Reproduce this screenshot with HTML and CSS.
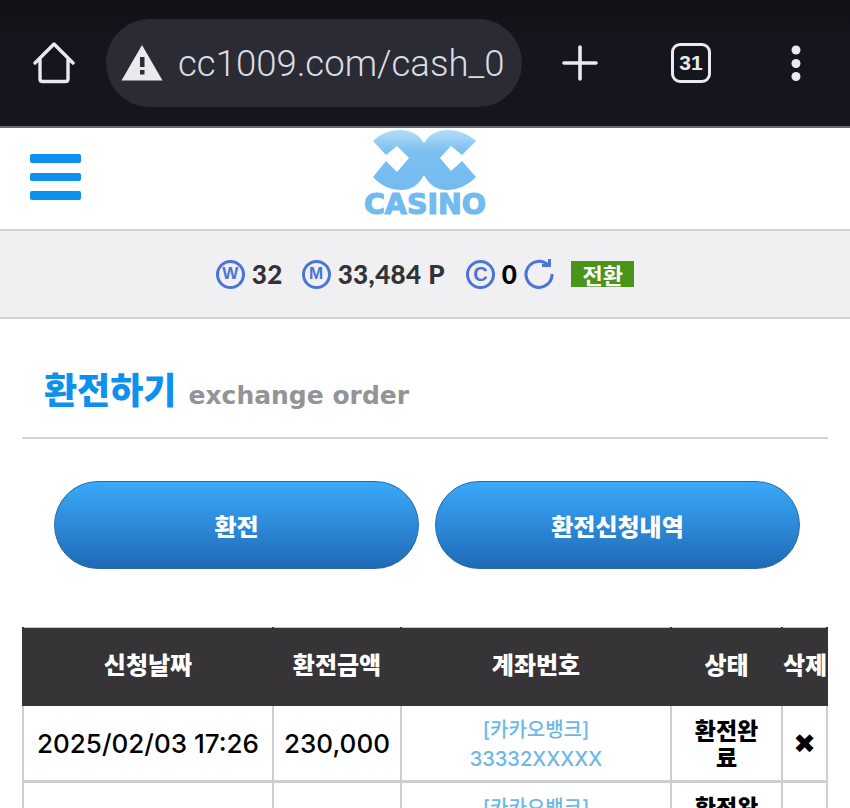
FILE: index.html
```html
<!DOCTYPE html>
<html lang="ko">
<head>
  <meta charset="UTF-8" />
  <title>환전하기</title>
  <link rel="stylesheet" href="styles.css">
</head>
<body>
  <div class="browser-bar">
    <svg class="home-icon" width="42" height="42" viewBox="0 0 42 42" fill="none" stroke="#e9e9ee" stroke-width="3.4" stroke-linejoin="round" stroke-linecap="round">
      <path d="M2 21 L21 2 L40 21 M7 17 V37 Q7 39.5 9.5 39.5 H32.5 Q35 39.5 35 37 V17"/>
    </svg>
    <div class="url-pill">
      <svg width="42" height="36" viewBox="0 0 42 36">
        <path d="M21 0 L41.500 35.500 H0.500 Z" fill="#e9e9ee"/>
        <rect x="19" y="12" width="4.500" height="10" fill="#2a2b34"/>
        <rect x="19" y="25" width="4.500" height="4.500" fill="#2a2b34"/>
      </svg>
      <span class="url-text">cc1009.com/cash_02</span>
    </div>
    <svg class="plus-icon" width="36" height="36" viewBox="0 0 36 36" stroke="#e9e9ee" stroke-width="3.600" stroke-linecap="round">
      <path d="M18 2 V34 M2 18 H34"/>
    </svg>
    <span class="tab-count">31</span>
    <svg class="more-icon" width="10" height="36" viewBox="0 0 10 36" fill="#e9e9ee">
      <circle cx="5" cy="5" r="4.500"/><circle cx="5" cy="18.500" r="4.500"/><circle cx="5" cy="31.500" r="4.500"/>
    </svg>
  </div>

  <header class="site-head">
    <div class="menu-btn"><i></i><i></i><i></i></div>
    <div class="logo">
      <svg width="106" height="62" viewBox="373 129 106 62">
        <defs>
          <linearGradient id="logoFill" x1="0" y1="0" x2="0" y2="1">
            <stop offset="0" stop-color="#b4ddf9"/>
            <stop offset="0.35" stop-color="#7cc0f1"/>
            <stop offset="1" stop-color="#72bbf0"/>
          </linearGradient>
        </defs>
        <path fill="url(#logoFill)" d="M374 141 C382 133 392 130 402 130 C412 130 420 135 425 143 C430 135 438 130 448 130 C458 130 468 133 477 141 L463 155 L452 146 L441 158 L452 171 L463 161 L477 177 C468 186 458 190 448 190 C438 190 430 185 425 175 C420 185 412 190 402 190 C392 190 382 186 374 177 L387 161 L398 172 L410 158 L398 146 L387 155 Z"/>
      </svg>
      <span class="logo-text">CASINO</span>
    </div>
  </header>

  <div class="balance-bar">
    <span class="coin">W</span><b class="amount amount-w">32</b>
    <span class="coin">M</span><b class="amount amount-m">33,484 P</b>
    <span class="coin coin-c">C</span><b class="amount amount-c">0</b>
    <svg class="refresh" width="30" height="30" viewBox="0 0 30 30" fill="none" stroke="#4a74d8" stroke-width="3">
      <path d="M24.500 6.500 A13 13 0 1 0 28 15"/>
      <path d="M18 6.500 H25.500 V0" stroke-width="3"/>
    </svg>
    <span class="convert-btn">전환</span>
  </div>

  <main class="content">
    <div class="page-title">
      <h1>환전하기</h1>
      <span>exchange order</span>
    </div>

    <div class="tab-buttons">
      <a class="pill-btn">환전</a>
      <a class="pill-btn">환전신청내역</a>
    </div>

    <table class="order-table">
      <thead>
        <tr>
          <th class="col-date">신청날짜</th>
          <th class="col-amount">환전금액</th>
          <th class="col-account">계좌번호</th>
          <th class="col-state">상태</th>
          <th class="col-del">삭제</th>
        </tr>
      </thead>
      <tbody>
        <tr>
          <td>2025/02/03 17:26</td>
          <td>230,000</td>
          <td class="account">[카카오뱅크]<br>33332XXXXX</td>
          <td class="state">환전완료</td>
          <td class="del">✖</td>
        </tr>
        <tr>
          <td>2025/02/03 17:26</td>
          <td>230,000</td>
          <td class="account">[카카오뱅크]<br>33332XXXXX</td>
          <td class="state">환전완료</td>
          <td class="del">✖</td>
        </tr>
      </tbody>
    </table>
  </main>
</body>
</html>
```

FILE: styles.css
```css
html, body { margin: 0; height: 808px; overflow: hidden; }
body { font-family: "Noto Sans CJK KR", "Noto Sans", sans-serif; background-color: #fff; color: #000; }

/* browser chrome */
.browser-bar { height: 126px; box-sizing: border-box; background: linear-gradient(#101114, #14151d 30%); display: flex; align-items: center; position: relative; padding-left: 33px; box-shadow: 0 2px 0 #6b6b6e; }
.home-icon { margin-right: 31px; }
.url-pill { width: 416px; height: 88px; border-radius: 44px; background-color: #2a2b34; display: flex; align-items: center; padding-left: 15px; box-sizing: border-box; }
.url-text { width: 327px; margin-left: 15px; overflow: hidden; white-space: nowrap; font-family: Roboto, sans-serif; font-size: 36.500px; font-weight: 300; color: #dcdde1; }
.plus-icon { margin-left: 40px; }
.tab-count { width: 40px; height: 40px; margin-left: 73px; box-sizing: border-box; border: 3.500px solid #e9e9ee; border-radius: 9px; display: flex; align-items: center; justify-content: center; font-family: "Liberation Sans", sans-serif; font-weight: bold; font-size: 21px; color: #e9e9ee; }
.more-icon { margin-left: 80px; }

/* site header */
.site-head { height: 101px; margin-top: 2px; display: flex; align-items: flex-start; position: relative; justify-content: center; border-bottom: 2px solid #d3d3d6; }
.menu-btn { position: absolute; left: 30px; top: 26px; width: 51px; display: flex; flex-direction: column; gap: 10px; }
.menu-btn i { display: block; height: 8.500px; border-radius: 2px; background-color: #0e90ee; }
.logo { display: flex; flex-direction: column; align-items: center; margin-top: 1px; }
.logo-text { font-family: "DejaVu Sans", sans-serif; font-weight: bold; font-size: 28.500px; line-height: 27px; color: #72bbf0; -webkit-text-stroke: 1.2px #72bbf0; }

/* balance */
.balance-bar { height: 86px; background-color: #f0eff2; border-bottom: 2px solid #d3d3d6; display: flex; align-items: center; justify-content: center; }
.coin { width: 29px; height: 29px; box-sizing: border-box; border: 3px solid #4a74d8; border-radius: 50%; display: flex; align-items: center; justify-content: center; font-family: "Liberation Sans", sans-serif; font-weight: bold; font-size: 17px; color: #4a74d8; }
.coin-c { font-size: 20px; }
.amount { font-family: Lato, sans-serif; font-weight: 900; font-size: 26px; letter-spacing: 0.4px; color: #333236; margin-left: 7px; }
.amount-w { margin-right: 19px; }
.amount-m { margin-right: 21px; }
.amount-c { margin-right: 7px; color: #000; }
.convert-btn { width: 63px; height: 26px; margin-left: 17px; background-color: #4a9419; color: #fff; font-weight: 700; font-size: 22px; line-height: 26px; text-align: center; }

/* main */
.content { padding: 0 22px; }
.page-title { height: 120px; box-sizing: border-box; padding: 44px 0 0 22px; border-bottom: 2px solid #d3d3d6; display: flex; align-items: baseline; gap: 12px; }
.page-title h1 { margin: 0; font-size: 36px; font-weight: 900; line-height: 50px; color: #0e90ee; }
.page-title span { font-family: "DejaVu Sans", sans-serif; font-weight: bold; font-size: 25px; color: #949396; }

.tab-buttons { display: flex; gap: 16px; padding: 42px 28px 0 32px; }
.pill-btn { flex: 1; height: 88px; box-sizing: border-box; border: 1px solid #2a6a9e; border-radius: 44px; background: linear-gradient(#3aa9fa, #1f6ab6); color: #fff; font-weight: 900; font-size: 24px; display: flex; align-items: center; justify-content: center; }

.order-table { width: 806px; margin-top: 58px; border-collapse: collapse; table-layout: fixed; }
.col-date { width: 250px; }
.col-amount { width: 128px; }
.col-account { width: 270px; }
.col-state { width: 111px; }
.col-del { width: 45px; }
.order-table th { height: 77px; padding: 0 0 4px; box-sizing: border-box; background-color: #373437; color: #fff; font-size: 24px; font-weight: 900; white-space: nowrap; overflow: hidden; border: 2px solid #373437; border-top: 1px solid #c4c4c6; }
.order-table td { height: 77px; padding: 2px 0 0; box-sizing: border-box; border: 2px solid #cfcfd2; text-align: center; font-family: Inter, "Noto Sans CJK KR", sans-serif; font-weight: 500; font-size: 26px; line-height: 29px; }
.order-table tbody tr { border-bottom: 3px solid #cfcfd2; }
.order-table td.account { padding-top: 5px; font-size: 20px; color: #6cb8e6; }
.order-table td.state { padding: 0 15px; font-family: "Noto Sans CJK KR", sans-serif; font-weight: 900; font-size: 23px; line-height: 27px; }
.order-table td.del { font-family: "DejaVu Sans", sans-serif; font-size: 27px; }
```
